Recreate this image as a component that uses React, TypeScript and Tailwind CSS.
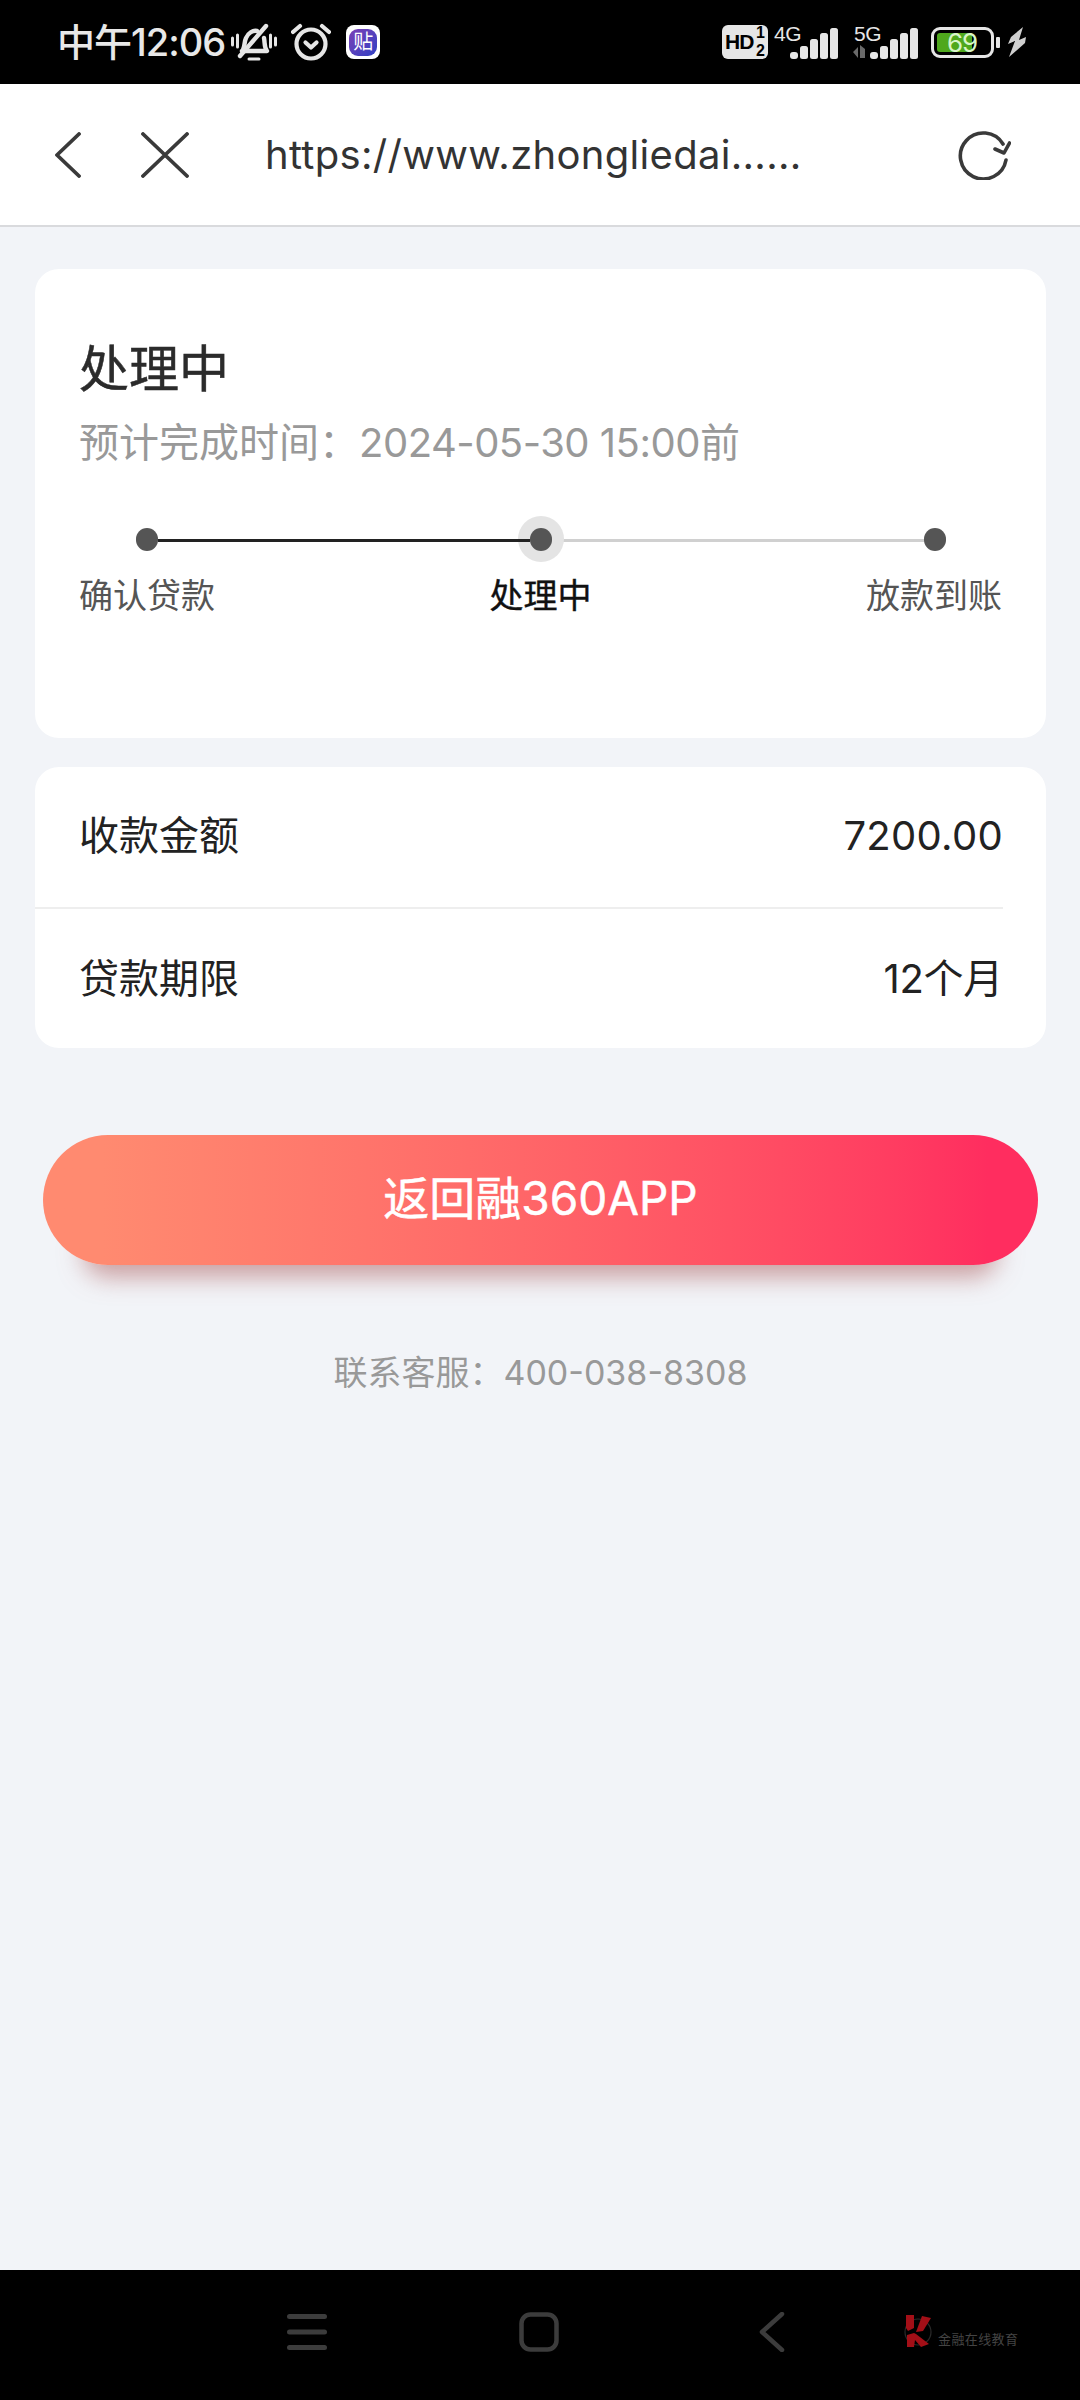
import React from "react";

const FONT = "[font-family:Inter,'Noto_Sans_CJK_SC',sans-serif]";

function Signal({ label, arrows }: { label: string; arrows?: boolean }) {
  return (
    <div className="relative h-[34px] w-[66px]">
      <span className="absolute left-[1px] top-[-3px] text-[21px] leading-[22px] tracking-[-0.5px] text-[#e6e6e6] [font-family:'Liberation_Sans',sans-serif]">
        {label}
      </span>
      <svg viewBox="0 0 66 34" className="absolute inset-0 h-[34px] w-[66px]" fill="#e6e6e6">
        {arrows && <path d="M0 26 L5 21 V32 Z M7 19 L12 23 V32 H7 Z" fill="#6a6a6a" />}
        <rect x="17" y="26" width="8" height="7" rx="3" />
        <rect x="27" y="20" width="8" height="13" rx="2.5" />
        <rect x="37" y="13" width="8" height="20" rx="2.5" />
        <rect x="47" y="7" width="8" height="26" rx="2.5" />
        <rect x="57" y="2" width="8" height="31" rx="2.5" />
      </svg>
    </div>
  );
}

function StatusBar() {
  return (
    <div className="flex h-[84px] items-center bg-black pl-[57px] pr-[54px]">
      <span className="text-[38px] font-medium leading-[84px] tracking-[-1px] text-[#e8e8e8]">中午12:06</span>
      {/* silent-mode bell */}
      <svg viewBox="0 0 46 38" className="ml-[6px] h-[38px] w-[46px]" fill="none" stroke="#e6e6e6" strokeWidth="4.4" strokeLinecap="round" strokeLinejoin="round">
        <path d="M1.5 15v7M6.5 12v12M39.5 12v12M44.5 15v7" strokeWidth="3" />
        <path d="M11 28c3-3 2-9 4-13 2-5 7-8 11-7M33 15c1 5 0 9 3 13 H11" />
        <path d="M9 33 L35 3" />
        <path d="M18 36h10" strokeWidth="3" />
      </svg>
      {/* alarm clock */}
      <svg viewBox="0 0 40 38" className="ml-[14px] h-[38px] w-[40px]" fill="none" stroke="#e6e6e6" strokeWidth="4.2" strokeLinecap="round" strokeLinejoin="round">
        <circle cx="20" cy="21" r="14.5" />
        <path d="M14.5 19.5 L20 24.5 L25.5 19.5" />
        <path d="M2 9 L9 3M38 9 L31 3" />
      </svg>
      {/* message app badge */}
      <div className="ml-[15px] flex h-[34px] w-[34px] items-center justify-center rounded-[8px] bg-white">
        <div className="flex h-[27px] w-[28px] items-center justify-center rounded-[9px] bg-gradient-to-br from-[#7a3fb5] to-[#2c3fc4] text-[20px] leading-none text-white">
          贴
        </div>
      </div>

      <div className="ml-auto flex items-center">
        <div className="relative h-[34px] w-[46px] rounded-[6px] bg-[#e6e6e6] [font-family:'Liberation_Sans',sans-serif]">
          <span className="absolute left-[3px] top-[7px] text-[21px] font-bold leading-[20px] tracking-[-1px] text-black">HD</span>
          <span className="absolute right-[3px] top-[0px] text-[16px] font-bold leading-[16px] text-black">1</span>
          <span className="absolute right-[3px] bottom-[0px] text-[16px] font-bold leading-[16px] text-black">2</span>
        </div>
        <div className="ml-[5px] mt-[1px]">
          <Signal label="4G" />
        </div>
        <div className="ml-[14px] mt-[1px]">
          <Signal label="5G" arrows />
        </div>
        {/* battery */}
        <div className="relative ml-[12px] h-[31px] w-[63px] rounded-[9px] border-[3px] border-[#e6e6e6] p-[3px]">
          <div className="h-full w-[35px] rounded-[3px] bg-[#4fa81d]" />
          <span className="absolute left-[13px] top-[-1px] text-[26px] leading-[27px] tracking-[-1px] text-[#d8f5c8] [font-family:Inter,sans-serif]">69</span>
        </div>
        <div className="ml-[2px] h-[11px] w-[4px] rounded-[1px] bg-[#e6e6e6]" />
        <svg viewBox="0 0 18 30" className="ml-[8px] h-[30px] w-[18px]" fill="#cfcfcf">
          <path d="M15 0 L3 10 L0 17 L7 14 L1 30 L17 16 L18 10 L11 13 Z" />
        </svg>
      </div>
    </div>
  );
}

function Toolbar() {
  return (
    <div className="flex h-[143px] items-center border-b-[2px] border-[#d9dadd] bg-white pl-[55px] pr-[69px]">
      <svg viewBox="0 0 26 46" className="h-[46px] w-[26px]" fill="none" stroke="#3a3a3a" strokeWidth="3.8" strokeLinecap="round" strokeLinejoin="round">
        <path d="M24 2 L2 23 L24 44" />
      </svg>
      <svg viewBox="0 0 48 46" className="ml-[60px] h-[46px] w-[48px]" fill="none" stroke="#3a3a3a" strokeWidth="3.8" strokeLinecap="round">
        <path d="M2 2 L46 44M46 2 L2 44" />
      </svg>
      <span className="ml-[76px] text-[40px] leading-[50px] tracking-[0.3px] text-[#333]">https://www.zhongliedai......</span>
      <svg viewBox="0 0 54 50" className="ml-auto h-[50px] w-[54px]" fill="none" stroke="#3a3a3a" strokeWidth="3.6" strokeLinecap="round" strokeLinejoin="round">
        <path d="M49 30 A23 23 0 1 1 46 14" />
        <path d="M52.5 13 L47 23 L38 19" />
      </svg>
    </div>
  );
}

function ProgressCard() {
  return (
    <section className="h-[469px] rounded-[24px] bg-white pl-[44px] pr-[44px] pt-[70px]">
      <h1 className="text-[50px] leading-[60px] text-[#2b2b2b] [-webkit-text-stroke:0.5px_#2b2b2b]">处理中</h1>
      <p className="mt-[19px] text-[40px] leading-[50px] text-[#999]">
        预计完成时间：<span className="tracking-[-0.5px]">2024-05-30 15:00</span>前
      </p>
      <div className="mt-[60px] flex h-[23px] items-center pl-[57px] pr-[56px]">
        <div className="h-[23px] w-[22px] shrink-0 rounded-full bg-[#555]" />
        <div className="relative z-[1] mt-[2px] h-[3px] flex-1 bg-[#222]" />
        <div className="relative h-[23px] w-[22px] shrink-0">
          <span className="absolute left-[-12px] top-[-12px] h-[46px] w-[46px] rounded-full bg-[#e4e4e4]" />
          <span className="absolute inset-0 z-[2] rounded-full bg-[#555]" />
        </div>
        <div className="mt-[2px] h-[3px] flex-1 bg-[#d0d0d0]" />
        <div className="h-[23px] w-[22px] shrink-0 rounded-full bg-[#555]" />
      </div>
      <div className="mt-[25px] flex justify-between text-[34px] leading-[40px]">
        <span className="text-[#555]">确认贷款</span>
        <span className="text-[#111] [-webkit-text-stroke:0.4px_#111]">处理中</span>
        <span className="text-[#555]">放款到账</span>
      </div>
    </section>
  );
}

function DetailCard() {
  return (
    <section className="mt-[29px] h-[281px] rounded-[24px] bg-white">
      <div className="flex h-[140px] items-center justify-between pb-[2px] pl-[44px] pr-[43px] text-[40px] text-[#222]">
        <span>收款金额</span>
        <span className="tracking-[0.3px]">7200.00</span>
      </div>
      <div className="mr-[43px] h-[2px] bg-[#eeeeee]" />
      <div className="flex h-[139px] items-center justify-between pl-[44px] pr-[43px] text-[40px] text-[#222]">
        <span>贷款期限</span>
        <span className="tracking-[-0.3px]">12个月</span>
      </div>
    </section>
  );
}

function NavBar() {
  return (
    <div className="flex h-[130px] items-start bg-black pt-[42px]">
      <svg viewBox="0 0 40 36" className="ml-[287px] mt-[2px] h-[36px] w-[40px]" fill="#3c3c3c">
        <rect x="0" y="0" width="40" height="5" rx="2.5" />
        <rect x="0" y="15.5" width="40" height="5" rx="2.5" />
        <rect x="0" y="31" width="40" height="5" rx="2.5" />
      </svg>
      <svg viewBox="0 0 40 40" className="ml-[192px] h-[40px] w-[40px]" fill="none" stroke="#3c3c3c" strokeWidth="4.5">
        <rect x="2.5" y="2.5" width="35" height="35" rx="9" />
      </svg>
      <svg viewBox="0 0 26 40" className="ml-[200px] h-[40px] w-[26px]" fill="none" stroke="#3c3c3c" strokeWidth="4.5" strokeLinecap="round" strokeLinejoin="round">
        <path d="M23 2 L3 20 L23 38" />
      </svg>
      {/* training-provider watermark */}
      <div className="ml-[118px] mt-[3px] flex items-end">
        <svg viewBox="0 0 30 32" className="h-[32px] w-[30px]" fill="#a30f17">
          <circle cx="15" cy="17" r="13" fill="none" stroke="#2a2a2a" strokeWidth="1.2" />
          <path d="M3 0 H11 V13 L5 16 L3 13 Z" />
          <path d="M19 1 L28 3 L20 16 L13 17 Z" />
          <path d="M4 20 L11 18 L13 19 L26 29 L18 32 L12 25 L11 32 H4 Z" />
        </svg>
        <span className="ml-[5px] text-[13px] leading-[16px] tracking-[0.4px] text-[#444]">金融在线教育</span>
      </div>
    </div>
  );
}

export default function App() {
  return (
    <div className={`flex h-[2400px] w-[1080px] flex-col overflow-hidden bg-[#f2f4f8] ${FONT}`}>
      <StatusBar />
      <Toolbar />
      <main className="flex-1 pl-[35px] pr-[34px] pt-[42px]">
        <ProgressCard />
        <DetailCard />
        <button className="mx-[8px] mt-[87px] flex h-[130px] w-[995px] items-center justify-center rounded-full bg-gradient-to-r from-[#ff8a70] from-[6%] to-[#ff2d5f] to-[95%] pb-[3px] text-[46px] text-white shadow-[0_52px_24px_-40px_rgba(170,90,90,0.55)] [-webkit-text-stroke:0.5px_#fff]">
          返回融360APP
        </button>
        <p className="mt-[88px] text-center text-[34px] leading-[40px] text-[#999]">联系客服：400-038-8308</p>
      </main>
      <NavBar />
    </div>
  );
}
